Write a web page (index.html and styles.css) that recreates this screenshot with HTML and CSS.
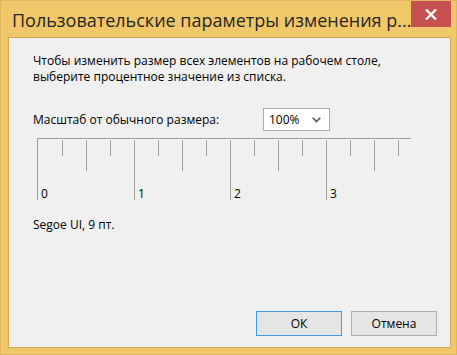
FILE: index.html
```html
<!DOCTYPE html>
<html lang="ru">
<head>
  <meta charset="UTF-8">
  <title>Пользовательские параметры изменения размера</title>
  <link rel="stylesheet" href="styles.css">
</head>
<body>

  <div class="window">
    <!-- Title bar -->
    <div class="titlebar">
      <span class="title">Пользовательские параметры изменения р...</span>
      <div class="close-btn">
        <svg width="12" height="11" viewBox="0 0 12 11">
          <path d="M1 0.5 L11 10.5 M11 0.5 L1 10.5" stroke="#fff" stroke-width="2.3" fill="none"/>
        </svg>
      </div>
    </div>

    <!-- Client area -->
    <div class="client">
      <p class="intro">Чтобы изменить размер всех элементов на рабочем столе,</p>
      <p class="intro">выберите процентное значение из списка.</p>

      <div class="scale-row">
        <span class="scale-label">Масштаб от обычного размера:</span>
        <div class="dropdown">
          <span>100%</span>
          <svg width="9" height="6" viewBox="0 0 9 6">
            <path d="M0.7 0.7 L4.5 4.5 L8.3 0.7" stroke="#555" stroke-width="1.6" fill="none"/>
          </svg>
        </div>
      </div>

      <div class="ruler" id="ruler"></div>

      <p class="font-info">Segoe UI, 9 пт.</p>

      <div class="buttons">
        <button class="btn default">ОК</button>
        <button class="btn">Отмена</button>
      </div>
    </div>
  </div>

  <script>
    // build the ruler: a tick every 24px, labels every 4 ticks
    const ruler = document.getElementById("ruler");
    for (let i = 0; i < 16; i++) {
      const tick = document.createElement("div");
      let kind = "short";
      if (i % 4 === 0) kind = "long";
      else if (i % 2 === 0) kind = "medium";
      tick.className = "tick " + kind;
      if (kind === "long") {
        const label = document.createElement("span");
        label.textContent = i / 4;
        tick.appendChild(label);
      }
      ruler.appendChild(tick);
    }
  </script>
</body>
</html>
```

FILE: styles.css
```css
* {
  margin: 0;
  padding: 0;
  box-sizing: border-box;
}

body {
  font-family: "Open Sans", "Noto Sans", sans-serif;
  font-size: 12px;
  color: #000;
  background: #F0C86A;
}

.window {
  width: 457px;
  height: 355px;
  display: flex;
  flex-direction: column;
  background: #F0C86A;
  border: 1px solid #E0B75E;
}

.titlebar {
  height: 36px;
  display: flex;
  align-items: flex-start;
}

.title {
  padding: 7px 0 0 11px;
  font-size: 18px;
  line-height: 24px;
  color: #262626;
  white-space: nowrap;
}

.close-btn {
  margin-left: auto;
  margin-right: 5px;
  width: 41px;
  height: 26px;
  background: #C75050;
  display: flex;
  align-items: center;
  justify-content: center;
  padding-top: 1px;
}

.client {
  flex: 1;
  margin: 0 5px 6px 7px;
  background: #F0F0F0;
  border: 1px solid #D3A954;
  padding: 15px 13px 11px 24px;
  display: flex;
  flex-direction: column;
}

.intro {
  line-height: 16px;
}

.scale-row {
  display: flex;
  align-items: center;
  margin-top: 23px;
}

.scale-label {
  width: 230px;
}

.dropdown {
  width: 67px;
  height: 23px;
  background: #fff;
  border: 1px solid #ABABAB;
  display: flex;
  align-items: center;
  justify-content: space-between;
  padding: 0 8px 0 5px;
}

.ruler {
  display: flex;
  width: 374px;
  margin: 7px 0 0 4px;
  border-top: 1px solid #A0A0A0;
  border-left: 1px solid #A0A0A0;
  padding-top: 1px;
}

.tick {
  width: 24px;
  flex: none;
  border-left: 1px solid #A0A0A0;
  display: flex;
  align-items: flex-end;
}

.tick:first-child {
  border-left: none;
  margin-left: -1px;
  width: 25px;
}

.tick.long {
  height: 60px;
}

.tick.medium {
  height: 31px;
}

.tick.short {
  height: 16px;
}

.tick span {
  padding-left: 3px;
  line-height: 12px;
}

.tick:first-child span {
  padding-left: 4px;
}

.font-info {
  margin-top: 16px;
}

.buttons {
  margin-top: auto;
  display: flex;
  justify-content: flex-end;
  gap: 9px;
}

.btn {
  width: 86px;
  height: 25px;
  font-family: inherit;
  font-size: 12px;
  color: #000;
  background: #E5E5E5;
  border: 1px solid #ADADAD;
}

.btn.default {
  border-color: #3C9BEA;
}
```
